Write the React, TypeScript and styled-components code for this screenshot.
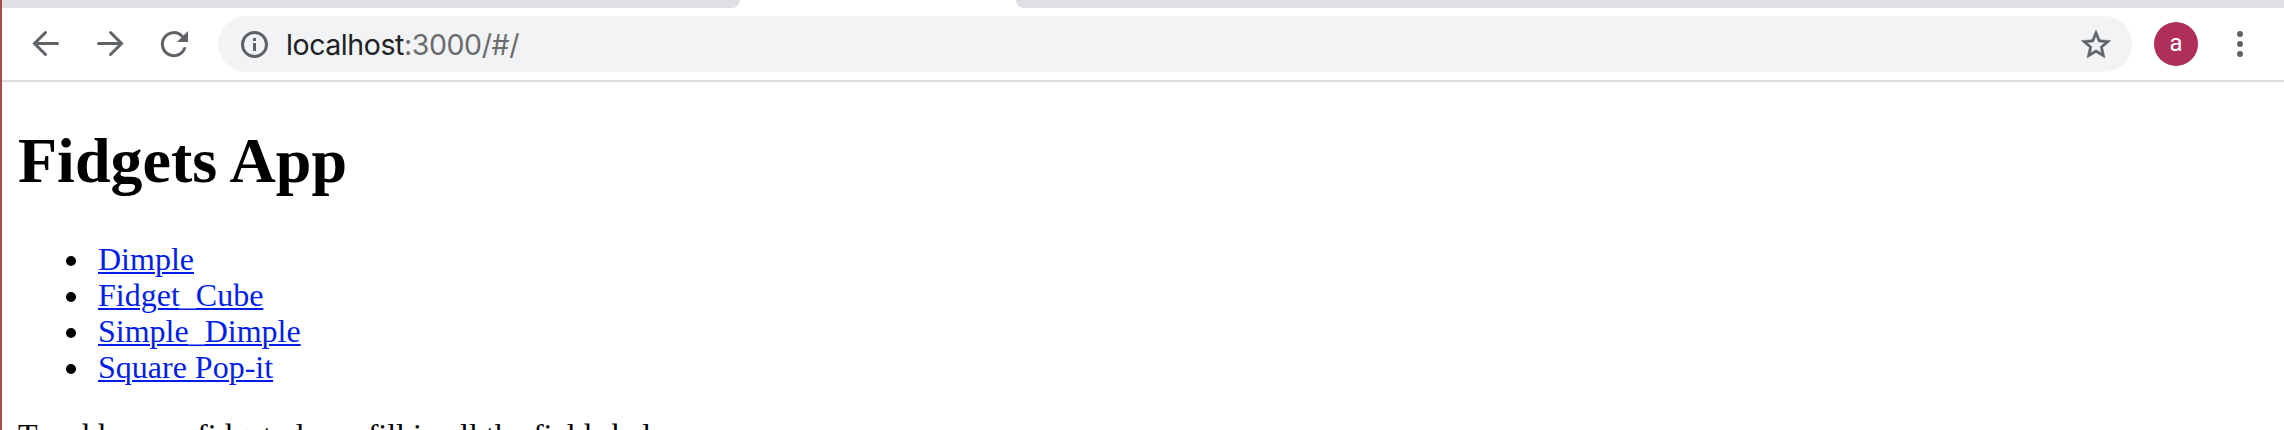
import React from 'react';
import styled, { createGlobalStyle } from 'styled-components';

const GlobalStyle = createGlobalStyle`
  * { box-sizing: border-box; }
  html, body { margin: 0; background: #fff; overflow: hidden; }
`;

const Window = styled.div`
  height: 430px;
  overflow: hidden;
  border-left: 2px solid #b0484a;
  background: #fff;
`;
const TabStrip = styled.div`
  display: flex;
  justify-content: space-between;
  height: 8px;
`;
const TabEdge = styled.div<{ $side: 'left' | 'right' }>`
  width: ${p => (p.$side === 'left' ? '738px' : '1268px')};
  background: #dee0e4;
  border-radius: ${p => (p.$side === 'left' ? '0 0 16px 0' : '0 0 0 16px')};
`;
const Toolbar = styled.div`
  display: flex;
  align-items: center;
  height: 74px;
  padding: 0 24px;
  border-bottom: 2px solid #dcdde2;
`;
const NavButtons = styled.div`
  display: flex;
  gap: 24px;
  margin-right: 24px;
`;
const Icon = styled.svg`
  display: block;
  flex: none;
  width: 40px;
  height: 40px;
`;
const AddressBar = styled.div`
  display: flex;
  flex: none;
  align-items: center;
  width: 1914px;
  height: 56px;
  padding: 0 16px;
  border-radius: 28px;
  background: #f1f3f4;
`;
const Url = styled.span`
  flex: 1;
  margin-left: 12px;
  padding-top: 1px;
  font: 28.5px/55px Inter, sans-serif;
  letter-spacing: -0.42px;
  color: #6b6c6e;
  b { font-weight: 400; color: #202124; }
`;
const Avatar = styled.div`
  width: 44px;
  height: 44px;
  margin-left: 22px;
  border-radius: 50%;
  background: #b02e5a;
  color: #fff;
  font: 24px/43px Roboto, sans-serif;
  text-align: center;
`;
const MenuIcon = styled(Icon)`
  margin-left: 22px;
`;
const Page = styled.main`
  padding: 0 16px;
  color: #000;
  font: 32px/36px "Liberation Serif", serif;
`;
const Title = styled.h1`
  margin: 42px 0 44px;
  font-size: 64px;
  line-height: 73px;
`;
const List = styled.ul`
  margin: 0 0 32px;
  padding-left: 48px;
  list-style: none;
`;
const Item = styled.li`
  display: flex;
  align-items: center;
  height: 36px;
  &::before {
    content: '';
    width: 10px;
    height: 10px;
    margin: 4px 22px 0 0;
    border-radius: 50%;
    background: #000;
  }
`;
const Link = styled.a`
  color: #001ee8;
  text-decoration: underline;
  text-decoration-thickness: 2px;
  text-underline-offset: 2px;
`;
/* Its own stroke continues the link's underline. */
const Underscore = styled.span`
  display: inline-block;
  line-height: 0;
`;
const Intro = styled.p`
  margin: 0;
  white-space: nowrap;
`;

const links = ['Dimple', 'Fidget_Cube', 'Simple_Dimple', 'Square Pop-it'];

function LinkName({ name }: { name: string }) {
  const [first, second] = name.split('_');
  return second ? <>{first}<Underscore>_</Underscore>{second}</> : <>{first}</>;
}

export default function App() {
  return (
    <Window>
      <GlobalStyle />
      <TabStrip>
        <TabEdge $side="left" />
        <TabEdge $side="right" />
      </TabStrip>
      <Toolbar>
        <NavButtons>
          <Icon viewBox="0 0 40 40" fill="none" stroke="#5f6368" strokeWidth="3" strokeLinecap="round">
            <path d="M31.5 19.5H8.5M19.5 8.5L8.5 19.5L19.5 30.5" />
          </Icon>
          <Icon viewBox="0 0 40 40" fill="none" stroke="#5f6368" strokeWidth="3" strokeLinecap="round">
            <path d="M8.5 19.5H31.5M20.5 8.5L31.5 19.5L20.5 30.5" />
          </Icon>
          <Icon viewBox="0 0 40 40" fill="none" stroke="#5f6368" strokeWidth="3" strokeLinecap="round">
            <path d="M30.5 24.5A11.5 11.5 0 1 1 28 12" />
            <path d="M34 7V18H23Z" fill="#5f6368" stroke="none" />
          </Icon>
        </NavButtons>
        <AddressBar>
          <Icon viewBox="0 0 40 40" fill="none" stroke="#5f6368" strokeWidth="3">
            <circle cx="20.5" cy="20.5" r="12" />
            <path d="M20.5 19V27M20.5 14V17" />
          </Icon>
          <Url><b>localhost</b>:3000/#/</Url>
          <Icon viewBox="0 0 40 40" fill="#5f6368" stroke="#5f6368" strokeWidth="0.3">
            <path
              transform="translate(2.4 3.1) scale(1.467)"
              d="M22 9.24l-7.19-.62L12 2 9.19 8.63 2 9.24l5.46 4.73L5.82 21 12 17.27 18.18 21l-1.63-7.03L22 9.24zM12 15.4l-3.76 2.27 1-4.28-3.32-2.88 4.38-.38L12 6.1l1.71 4.04 4.38.38-3.32 2.88 1 4.28L12 15.4z"
            />
          </Icon>
        </AddressBar>
        <Avatar>a</Avatar>
        <MenuIcon viewBox="0 0 40 40" fill="#5f6368">
          <circle cx="20" cy="10" r="3" />
          <circle cx="20" cy="20" r="3" />
          <circle cx="20" cy="30" r="3" />
        </MenuIcon>
      </Toolbar>
      <Page>
        <Title>Fidgets App</Title>
        <List>
          {links.map(name => (
            <Item key={name}><Link href="#/"><LinkName name={name} /></Link></Item>
          ))}
        </List>
        <Intro>To add a new fidget please fill in all the fields below</Intro>
      </Page>
    </Window>
  );
}
